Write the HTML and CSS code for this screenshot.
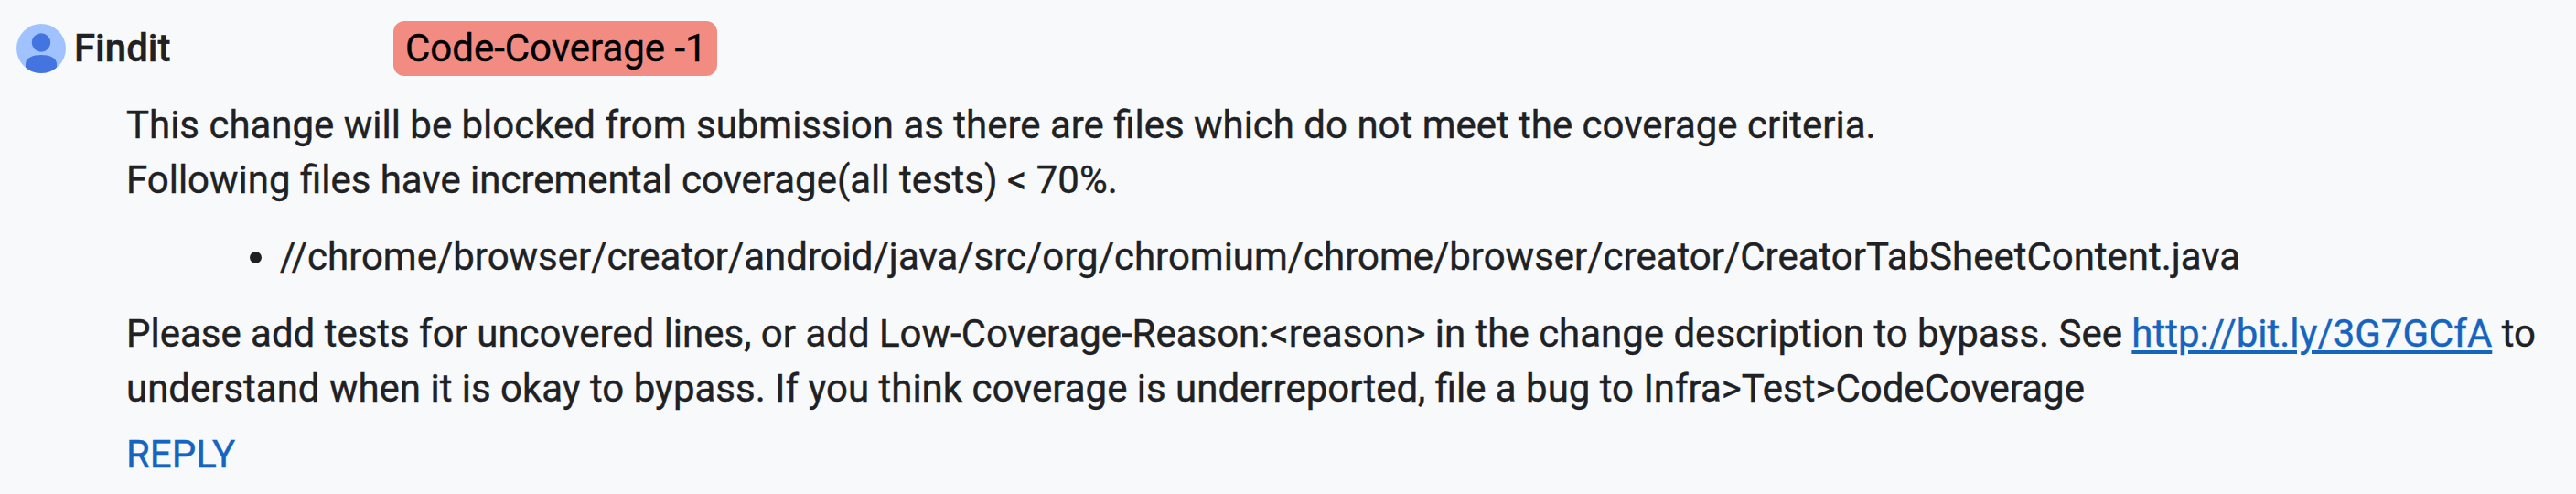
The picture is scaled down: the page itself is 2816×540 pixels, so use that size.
FILE: index.html
```html
<!DOCTYPE html>
<html lang="en">
<head>
<meta charset="utf-8">
<title>Findit</title>
<link rel="stylesheet" href="styles.css">
</head>
<body>
<article class="message">
  <header class="header">
    <svg class="avatar" viewBox="0 0 54 54"><defs><clipPath id="disc"><circle cx="27" cy="27" r="27"/></clipPath></defs><g clip-path="url(#disc)"><rect width="54" height="54" fill="#a0c3ff"/><circle cx="27" cy="20.5" r="10.2" fill="#4374e0"/><path d="M10 54V44C10 37 18 34 27 34S44 37 44 44V54Z" fill="#4374e0"/></g></svg>
    <span class="author">Findit</span>
    <span class="vote">Code-Coverage -1</span>
  </header>
  <div class="content">
    <p>This change will be blocked from submission as there are files which do not meet the coverage criteria.<br>Following files have incremental coverage(all tests) &lt; 70%.</p>
    <ul class="files"><li>//chrome/browser/creator/android/java/src/org/chromium/chrome/browser/creator/CreatorTabSheetContent.java</li></ul>
    <p>Please add tests for uncovered lines, or add Low-Coverage-Reason:&lt;reason&gt; in the change description to bypass. See <a class="link" href="#">http://bit.ly/3G7GCfA</a> to<br>understand when it is okay to bypass. If you think coverage is underreported, file a bug to Infra&gt;Test&gt;CodeCoverage</p>
    <div class="reply">REPLY</div>
  </div>
</article>
</body>
</html>
```
FILE: styles.css
```css
body { margin: 0; background: #f8f9fb; color: #202124; font: 41.97px/60px Roboto, sans-serif; -webkit-text-stroke: 0.4px currentColor; }
.message { height: 540px; overflow: hidden; box-sizing: border-box; padding: 23px 0 0 18px; }
.header { display: flex; align-items: center; height: 60px; }
.avatar { width: 54px; height: 54px; margin-right: 9px; }
.author { width: 349px; font-weight: 500; }
.vote { padding: 0 11px 0 13px; border-radius: 12px; background: #f28b82; color: #000; }
.content { padding: 24px 0 0 120px; white-space: nowrap; }
p { margin: 0 0 24px; }
.files { margin: 0 0 24px; padding-left: 168px; }
.link { color: #1565c0; text-decoration-thickness: 4px; text-underline-offset: 4px; }
.reply { margin-top: -12px; color: #1565c0; }
```
